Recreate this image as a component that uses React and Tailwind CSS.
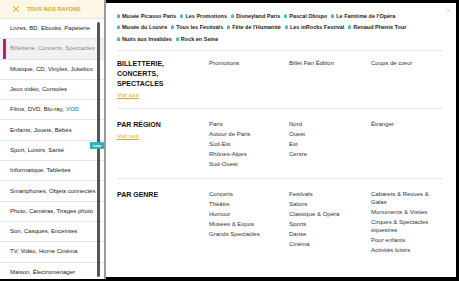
import { X } from 'lucide-react';

const rayons = [
  { label: 'Livres, BD, Ebooks, Papeterie' },
  { label: 'Billetterie, Concerts, Spectacles', active: true },
  { label: 'Musique, CD, Vinyles, Jukebox' },
  { label: 'Jeux vidéo, Consoles' },
  { label: 'Films, DVD, Blu-ray,', extra: 'VOD' },
  { label: 'Enfants, Jouets, Bébés' },
  { label: 'Sport, Loisirs, Santé' },
  { label: 'Informatique, Tablettes' },
  { label: 'Smartphones, Objets connectés' },
  { label: 'Photo, Caméras, Tirages photo' },
  { label: 'Son, Casques, Enceintes' },
  { label: 'TV, Vidéo, Home Cinéma' },
  { label: 'Maison, Électroménager' },
];

const tagRows = [
  ['Musée Picasso Paris', 'Les Promotions', 'Disneyland Paris', 'Pascal Obispo', "Le Fantôme de l'Opéra"],
  ['Musée du Louvre', 'Tous les Festivals', "Fête de l'Humanité", 'Les inRocks Festival', 'Renaud Phenix Tour'],
  ['Nuits aux Invalides', 'Rock en Seine'],
];

const sections = [
  {
    title: ['BILLETTERIE,', 'CONCERTS,', 'SPECTACLES'],
    voirTout: true,
    cols: [['Promotions'], ['Billet Fan Édition'], ['Coups de cœur']],
    box: 'h-[58px] pt-[8px]',
  },
  {
    title: ['PAR RÉGION'],
    voirTout: true,
    cols: [
      ['Paris', 'Autour de Paris', 'Sud-Est', 'Rhônes-Alpes', 'Sud-Ouest'],
      ['Nord', 'Ouest', 'Est', 'Centre'],
      ['Étranger'],
    ],
    box: 'h-[70px] pt-[11px]',
  },
  {
    title: ['PAR GENRE'],
    voirTout: false,
    cols: [
      ['Concerts', 'Théâtre', 'Humour', 'Musées & Expos', 'Grands Spectacles'],
      ['Festivals', 'Salons', 'Classique & Opéra', 'Sports', 'Danse', 'Cinéma'],
      ['Cabarets & Revues & Galas', 'Monuments & Visites', 'Cirques & Spectacles équestres', 'Pour enfants', 'Activités loisirs'],
    ],
    box: 'pt-[11px] border-b-0',
  },
];

function TagDot() {
  return (
    <svg width="3" height="4" viewBox="0 0 3 4" className="shrink-0">
      <path d="M0 1 L1.5 0 L3 1 L3 4 L0 4 Z" fill="#4cbfbf" />
    </svg>
  );
}

function Rayons() {
  return (
    <aside className="relative w-[104px] h-[279px] bg-white overflow-hidden flex flex-col">
      <div className="h-[19px] shrink-0 bg-[#fcf7e7] border-b border-[#ebe6d6] flex items-center pl-[11px] gap-[6px]">
        <X size={10} strokeWidth={2.5} className="text-[#d9a521]" />
        <span className="text-[5.4px] font-bold text-[#d9a521] tracking-[0.1px]">TOUS NOS RAYONS</span>
      </div>
      <ul>
        {rayons.map((r) => (
          <li
            key={r.label}
            className={`relative h-[20.3px] border-b border-[#e4e4e4] flex items-center pl-[10px] text-[6px] whitespace-nowrap ${
              r.active ? 'bg-[#f1f1f1] text-[#8a8a8a]' : 'text-[#222]'
            }`}
          >
            {r.active && <span className="absolute left-[3px] top-0 bottom-0 w-[3px] bg-[#c2187a]" />}
            {r.label}
            {r.extra && <span className="ml-[2px] font-bold text-[#2bb3bb]">{r.extra}</span>}
          </li>
        ))}
      </ul>
      <div className="absolute left-[97px] top-[22px] w-[3px] h-[255px] rounded-full bg-[#555]" />
      <div className="absolute left-[90px] top-[142px] w-[14px] h-[7px] bg-[#2bb3bb] text-white text-[4px] font-bold flex items-center justify-center">
        new
      </div>
    </aside>
  );
}

function Section({ s }) {
  return (
    <div className={`grid grid-cols-[92px_80px_82px_64px] border-b border-[#e6e6e6] ${s.box}`}>
      <div>
        {s.title.map((t) => (
          <div key={t} className="text-[7px] font-bold leading-[10px] text-[#111]">{t}</div>
        ))}
        {s.voirTout && (
          <div className="mt-[2px] text-[6px] leading-[8px] text-[#d9a521] underline">Voir tout</div>
        )}
      </div>
      {s.cols.map((col, i) => (
        <div key={i} className="flex flex-col gap-[2px]">
          {col.map((item) => (
            <span key={item} className="text-[6px] leading-[8px] text-[#333]">{item}</span>
          ))}
        </div>
      ))}
    </div>
  );
}

export default function App() {
  return (
    <div
      className="w-[459px] h-[281px] bg-black flex overflow-hidden"
      style={{ fontFamily: '"Liberation Sans", Arial, sans-serif' }}
    >
      <Rayons />
      <div className="w-[2px] h-[279px] bg-[#9a9a9a]" />
      <main className="relative mt-[3px] w-[350px] h-[274px] bg-white pl-[11px] pr-[13px] flex flex-col">
        <div className="h-[48px] pt-[7px] border-b border-[#e6e6e6]">
          {tagRows.map((row, i) => (
            <div key={i} className="flex items-center gap-[4px] h-[11.5px]">
              {row.map((t) => (
                <span key={t} className="flex items-center gap-[2px] text-[5.5px] font-bold text-[#222] whitespace-nowrap">
                  <TagDot />
                  {t}
                </span>
              ))}
            </div>
          ))}
        </div>
        {sections.map((s) => (
          <Section key={s.title[0]} s={s} />
        ))}
        <X size={7} strokeWidth={1.2} className="absolute right-[4px] top-[4px] text-[#999]" />
      </main>
    </div>
  );
}
